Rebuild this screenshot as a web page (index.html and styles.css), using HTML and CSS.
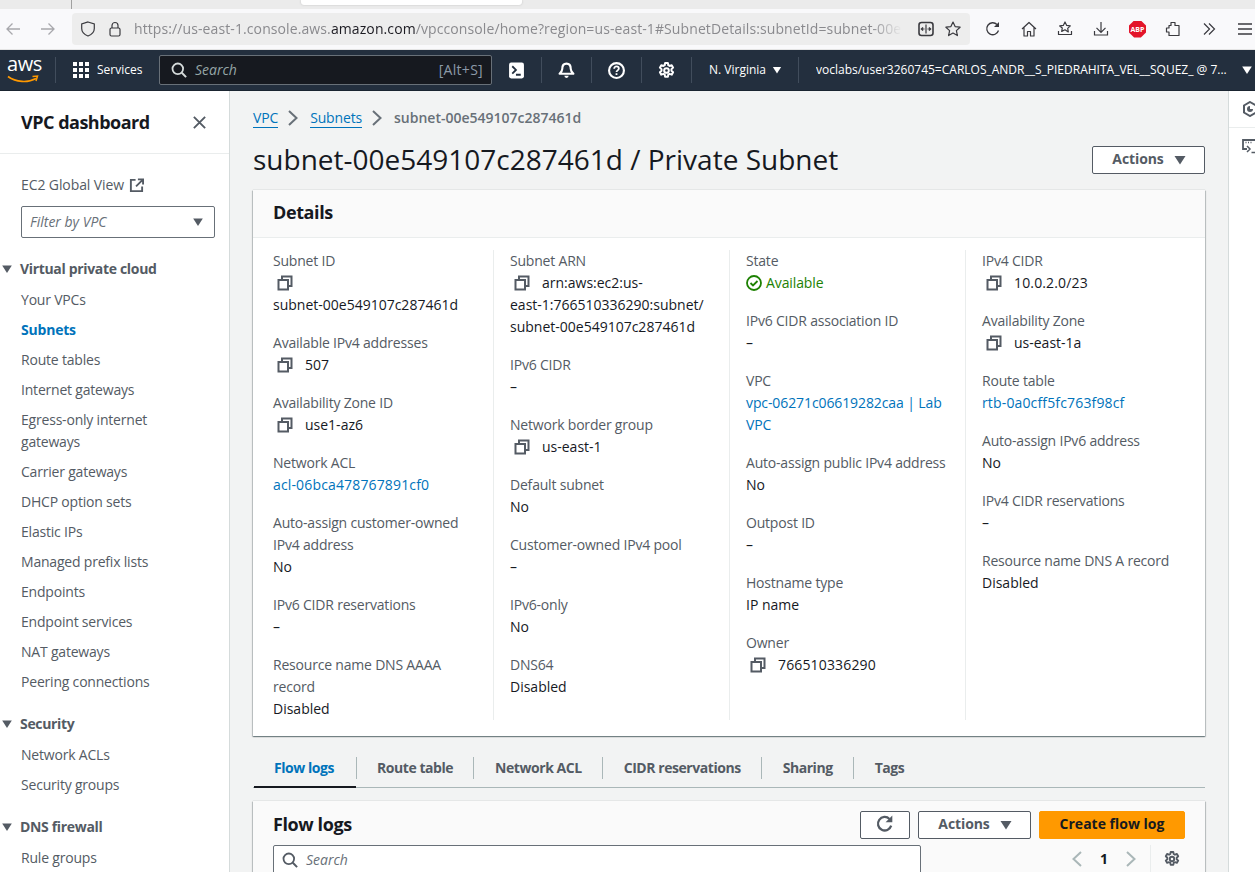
FILE: index.html
```html
<!DOCTYPE html>
<html lang="en">
<head>
<meta charset="utf-8">
<title>Subnet details</title>
<link rel="stylesheet" href="styles.css">
</head>
<body>
<svg class="defs" width="0" height="0">
  <symbol id="copy" viewBox="0 0 16 16"><path d="M1.500 5h9.500v9.500H1.500zM5 5V1.500h9.500V11H11" fill="none" stroke="currentColor" stroke-width="2"/></symbol>
  <symbol id="caret" viewBox="0 0 16 16"><path d="M2.500 4h11L8 12.500z" fill="currentColor"/></symbol>
  <symbol id="chev" viewBox="0 0 18 18"><path d="M5 2l7.500 7L5 16" fill="none" stroke="currentColor" stroke-width="2"/></symbol>
  <symbol id="gear" viewBox="0 0 16 16"><path d="M6.700 1h2.600l.4 2 1.200.7 2-.7 1.300 2.300-1.500 1.400v1.500l1.500 1.400-1.300 2.300-2-.7-1.200.7-.4 2H6.700l-.4-2-1.200-.7-2 .7-1.300-2.300 1.500-1.400V6.700L1.800 5.300 3.100 3l2 .7 1.200-.7z" fill="none" stroke="currentColor" stroke-width="1.900" stroke-linejoin="round"/><circle cx="8" cy="8" r="2.200" fill="none" stroke="currentColor" stroke-width="1.900"/></symbol>
  <symbol id="search" viewBox="0 0 16 16"><circle cx="6.800" cy="6.800" r="5.300" fill="none" stroke="currentColor" stroke-width="1.800"/><path d="M10.800 10.800l4.300 4.300" fill="none" stroke="currentColor" stroke-width="2"/></symbol>
</svg>

<div class="tabstrip"><span class="tabstrip-rule"></span><span class="tabstrip-tab"></span></div>

<div class="toolbar">
  <div class="tb-nav">
    <svg class="tb-icon dim" viewBox="0 0 16 16"><path d="M15 8H2M7.500 2.500L2 8l5.500 5.500" fill="none" stroke="currentColor" stroke-width="1.300"/></svg>
    <svg class="tb-icon dim" viewBox="0 0 16 16"><path d="M1 8h13M8.500 2.500L14 8l-5.500 5.500" fill="none" stroke="currentColor" stroke-width="1.300"/></svg>
  </div>
  <div class="urlbar">
    <svg class="tb-icon" viewBox="0 0 16 16"><path d="M8 1l6.300 2v4.500c0 3.500-2.500 6-6.300 7.500-3.800-1.500-6.300-4-6.300-7.500V3z" fill="none" stroke="currentColor" stroke-width="1.200"/></svg>
    <svg class="tb-icon" viewBox="0 0 16 16"><rect x="3" y="7" width="10" height="8" rx="1.500" fill="none" stroke="currentColor" stroke-width="1.200"/><path d="M5 7V4.500a3 3 0 0 1 6 0V7" fill="none" stroke="currentColor" stroke-width="1.200"/></svg>
    <div class="url"><span>https://us-east-1.console.aws.</span><b>amazon.com</b><span>/vpcconsole/home?region=us-east-1#SubnetDetails:subnetId=subnet-00e549107c287461d</span></div>
    <svg class="tb-icon" viewBox="0 0 16 16"><rect x="1" y="1.500" width="14" height="13" rx="2.500" fill="none" stroke="currentColor" stroke-width="1.600"/><path d="M8 3.500v9M3.500 8h3M5 6.300L3.300 8 5 9.700M12.500 8h-3M11 6.300L12.700 8 11 9.700" fill="none" stroke="currentColor" stroke-width="1.200"/></svg>
    <svg class="tb-icon" viewBox="0 0 16 16"><path d="M8 1l2.100 4.600 5 .6-3.700 3.400 1 5L8 12.100l-4.400 2.500 1-5L.9 6.200l5-.6z" fill="none" stroke="currentColor" stroke-width="1.200" stroke-linejoin="round"/></svg>
  </div>
  <div class="tb-actions">
    <svg class="tb-icon" viewBox="0 0 16 16"><path d="M13.500 9.500A6 6 0 1 1 12 3.500" fill="none" stroke="currentColor" stroke-width="1.300"/><path d="M14 1v5H9z" fill="currentColor"/></svg>
    <svg class="tb-icon" viewBox="0 0 16 16"><path d="M1 8l7-6.500L15 8M3 6.500V15h3.500v-4.500h3V15H13V6.500" fill="none" stroke="currentColor" stroke-width="1.200" stroke-linejoin="round"/></svg>
    <svg class="tb-icon" viewBox="0 0 16 16"><path d="M8 1l1.700 3.400 3.600.5-2.600 2.500.6 3.500L8 8.800l-3.300 1.600.6-3.500L2.700 4.900l3.600-.5zM1.500 10v3.500h13V10" fill="none" stroke="currentColor" stroke-width="1.200" stroke-linejoin="round"/></svg>
    <svg class="tb-icon" viewBox="0 0 16 16"><path d="M8 1v10M3.500 6.800L8 11.300l4.500-4.500M1.500 10v4h13v-4" fill="none" stroke="currentColor" stroke-width="1.200"/></svg>
    <span class="abp">ABP</span>
    <svg class="tb-icon" viewBox="0 0 16 16"><path d="M6 1.500h4v3h4v10H4v-3.500H1.500V7H4V4.500h2z" fill="none" stroke="currentColor" stroke-width="1.200" stroke-linejoin="round"/></svg>
    <svg class="tb-icon" viewBox="0 0 16 16"><path d="M3 2.500L8.500 8 3 13.500M8 2.500L13.500 8 8 13.500" fill="none" stroke="currentColor" stroke-width="1.200"/></svg>
    <svg class="tb-icon" viewBox="0 0 16 16"><path d="M1 3h14M1 8h14M1 13h14" fill="none" stroke="currentColor" stroke-width="1.300"/></svg>
  </div>
</div>

<header class="awsnav">
  <div class="logo"><span class="logo-text">aws</span>
    <svg class="logo-smile" viewBox="0 0 32 9"><path d="M1 1.500c8 6 20 6.500 28 2" fill="none" stroke="#f90" stroke-width="1.700"/><path d="M25.500 1.500l5-.5-1.500 5" fill="none" stroke="#f90" stroke-width="1.500"/></svg>
  </div>
  <span class="nav-sep"></span>
  <svg class="grid-icon" viewBox="0 0 16 16"><path d="M0 0h4v4H0zM6 0h4v4H6zM12 0h4v4h-4zM0 6h4v4H0zM6 6h4v4H6zM12 6h4v4h-4zM0 12h4v4H0zM6 12h4v4H6zM12 12h4v4h-4z" fill="#fff"/></svg>
  <span class="services">Services</span>
  <div class="nav-search">
    <svg class="nav-search-icon" viewBox="0 0 16 16"><use href="#search"/></svg>
    <i class="nav-search-text">Search</i>
    <span class="nav-search-key">[Alt+S]</span>
  </div>
  <span class="nav-slot"><svg class="nav-icon" viewBox="0 0 16 16"><rect x="1" y="0.500" width="14" height="15" rx="2" fill="#fff"/><path d="M4 4l3.500 3.500L4 11M7.500 12h4.500" fill="none" stroke="#232f3e" stroke-width="1.700"/></svg></span>
  <span class="nav-sep"></span>
  <span class="nav-slot"><svg class="nav-icon" viewBox="0 0 16 16"><path d="M8 1.500c3 0 4 2.500 4 5 0 2 1.500 3.500 2.500 4.500h-13c1-1 2.500-2.500 2.500-4.500 0-2.500 1-5 4-5z" fill="none" stroke="#fff" stroke-width="2" stroke-linejoin="round"/><path d="M6 13a2 2 0 0 0 4 0z" fill="#fff"/></svg></span>
  <span class="nav-sep"></span>
  <span class="nav-slot"><svg class="nav-icon" viewBox="0 0 16 16"><circle cx="8" cy="8" r="7" fill="none" stroke="#fff" stroke-width="2"/><path d="M5.800 6.300C5.800 5 6.800 4.200 8 4.200s2.200.8 2.200 2c0 1.700-2.200 1.700-2.200 3.300M8 10.500v1.800" fill="none" stroke="#fff" stroke-width="1.700"/></svg></span>
  <span class="nav-sep"></span>
  <span class="nav-slot"><svg class="nav-icon" viewBox="0 0 16 16"><use href="#gear"/></svg></span>
  <span class="nav-sep"></span>
  <span class="region">N. Virginia</span>
  <svg class="caret-region" viewBox="0 0 16 16"><use href="#caret"/></svg>
  <span class="nav-sep"></span>
  <span class="user">voclabs/user3260745=CARLOS_ANDR__S_PIEDRAHITA_VEL__SQUEZ_ @ 7...</span>
  <svg class="caret-user" viewBox="0 0 16 16"><use href="#caret"/></svg>
</header>

<div class="shell">
  <aside class="sidebar">
    <div class="side-head"><h2>VPC dashboard</h2>
      <svg class="side-close" viewBox="0 0 16 16"><path d="M2 2l12 12M14 2L2 14" fill="none" stroke="currentColor" stroke-width="2"/></svg>
    </div>
    <div class="side-body">
      <div class="ec2">EC2 Global View
        <svg class="ext" viewBox="0 0 16 16"><path d="M7 2H2v12h12V9M9.500 1.500H15V7M14.500 2L7.500 9" fill="none" stroke="currentColor" stroke-width="2"/></svg>
      </div>
      <div class="filter"><i>Filter by VPC</i><svg class="filter-caret" viewBox="0 0 16 16"><use href="#caret"/></svg></div>
      <div class="sec-title first"><svg class="sec-caret" viewBox="0 0 16 16"><use href="#caret"/></svg>Virtual private cloud</div>
      <ul class="side-list">
        <li>Your VPCs</li>
        <li class="active">Subnets</li>
        <li>Route tables</li>
        <li>Internet gateways</li>
        <li>Egress-only internet gateways</li>
        <li>Carrier gateways</li>
        <li>DHCP option sets</li>
        <li>Elastic IPs</li>
        <li>Managed prefix lists</li>
        <li>Endpoints</li>
        <li>Endpoint services</li>
        <li>NAT gateways</li>
        <li>Peering connections</li>
      </ul>
      <div class="sec-title"><svg class="sec-caret" viewBox="0 0 16 16"><use href="#caret"/></svg>Security</div>
      <ul class="side-list">
        <li>Network ACLs</li>
        <li>Security groups</li>
      </ul>
      <div class="sec-title"><svg class="sec-caret" viewBox="0 0 16 16"><use href="#caret"/></svg>DNS firewall</div>
      <ul class="side-list">
        <li>Rule groups</li>
      </ul>
    </div>
  </aside>

  <main class="main">
    <nav class="crumbs">
      <a class="link-u">VPC</a>
      <svg class="crumb-chev" viewBox="0 0 18 18"><use href="#chev"/></svg>
      <a class="link-u">Subnets</a>
      <svg class="crumb-chev" viewBox="0 0 18 18"><use href="#chev"/></svg>
      <span class="crumb-cur">subnet-00e549107c287461d</span>
    </nav>
    <div class="page-head">
      <h1>subnet-00e549107c287461d / Private Subnet</h1>
      <button class="btn btn-actions">Actions<svg class="btn-caret" viewBox="0 0 16 16"><use href="#caret"/></svg></button>
    </div>

    <section class="card">
      <div class="card-head"><h2>Details</h2></div>
      <div class="cols">
        <div class="col">
          <dl><dt>Subnet ID</dt><dd><span class="copyline"><svg class="copy" viewBox="0 0 16 16"><use href="#copy"/></svg></span>subnet-00e549107c287461d</dd></dl>
          <dl><dt>Available IPv4 addresses</dt><dd><svg class="copy copy-in" viewBox="0 0 16 16"><use href="#copy"/></svg>507</dd></dl>
          <dl><dt>Availability Zone ID</dt><dd><svg class="copy copy-in" viewBox="0 0 16 16"><use href="#copy"/></svg>use1-az6</dd></dl>
          <dl><dt>Network ACL</dt><dd><a class="link">acl-06bca478767891cf0</a></dd></dl>
          <dl><dt>Auto-assign customer-owned IPv4 address</dt><dd>No</dd></dl>
          <dl><dt>IPv6 CIDR reservations</dt><dd>–</dd></dl>
          <dl><dt>Resource name DNS AAAA record</dt><dd>Disabled</dd></dl>
        </div>
        <div class="col">
          <dl><dt>Subnet ARN</dt><dd><svg class="copy copy-in" viewBox="0 0 16 16"><use href="#copy"/></svg>arn:aws:ec2:us-<br>east-1:766510336290:subnet/<br>subnet-00e549107c287461d</dd></dl>
          <dl><dt>IPv6 CIDR</dt><dd>–</dd></dl>
          <dl><dt>Network border group</dt><dd><svg class="copy copy-in" viewBox="0 0 16 16"><use href="#copy"/></svg>us-east-1</dd></dl>
          <dl><dt>Default subnet</dt><dd>No</dd></dl>
          <dl><dt>Customer-owned IPv4 pool</dt><dd>–</dd></dl>
          <dl><dt>IPv6-only</dt><dd>No</dd></dl>
          <dl><dt>DNS64</dt><dd>Disabled</dd></dl>
        </div>
        <div class="col">
          <dl><dt>State</dt><dd class="ok"><svg class="ok-icon" viewBox="0 0 16 16"><circle cx="8" cy="8" r="7" fill="none" stroke="currentColor" stroke-width="1.800"/><path d="M4.500 8l2.500 2.500L11.500 6" fill="none" stroke="currentColor" stroke-width="1.800"/></svg>Available</dd></dl>
          <dl><dt>IPv6 CIDR association ID</dt><dd>–</dd></dl>
          <dl><dt>VPC</dt><dd><a class="link link-vpc">vpc-06271c06619282caa | Lab VPC</a></dd></dl>
          <dl><dt>Auto-assign public IPv4 address</dt><dd>No</dd></dl>
          <dl><dt>Outpost ID</dt><dd>–</dd></dl>
          <dl><dt>Hostname type</dt><dd>IP name</dd></dl>
          <dl><dt>Owner</dt><dd class="digits"><svg class="copy copy-in" viewBox="0 0 16 16"><use href="#copy"/></svg>766510336290</dd></dl>
        </div>
        <div class="col">
          <dl><dt>IPv4 CIDR</dt><dd class="digits"><svg class="copy copy-in" viewBox="0 0 16 16"><use href="#copy"/></svg>10.0.2.0/23</dd></dl>
          <dl><dt>Availability Zone</dt><dd><svg class="copy copy-in" viewBox="0 0 16 16"><use href="#copy"/></svg>us-east-1a</dd></dl>
          <dl><dt>Route table</dt><dd><a class="link">rtb-0a0cff5fc763f98cf</a></dd></dl>
          <dl><dt>Auto-assign IPv6 address</dt><dd>No</dd></dl>
          <dl><dt>IPv4 CIDR reservations</dt><dd>–</dd></dl>
          <dl><dt>Resource name DNS A record</dt><dd>Disabled</dd></dl>
        </div>
      </div>
    </section>

    <div class="tabs">
      <span class="tab active">Flow logs</span>
      <span class="tab">Route table</span>
      <span class="tab">Network ACL</span>
      <span class="tab">CIDR reservations</span>
      <span class="tab">Sharing</span>
      <span class="tab">Tags</span>
    </div>

    <section class="card card-flow">
      <div class="flow-head">
        <h2>Flow logs</h2>
        <div class="flow-btns">
          <button class="btn btn-refresh"><svg class="refresh" viewBox="0 0 16 16"><path d="M13.500 9.500A6 6 0 1 1 12 3.500" fill="none" stroke="currentColor" stroke-width="2"/><path d="M14.500 0.500v6h-6z" fill="currentColor"/></svg></button>
          <button class="btn btn-actions">Actions<svg class="btn-caret" viewBox="0 0 16 16"><use href="#caret"/></svg></button>
          <button class="btn btn-primary">Create flow log</button>
        </div>
      </div>
      <div class="flow-tools">
        <div class="flow-search"><svg class="flow-search-icon" viewBox="0 0 16 16"><use href="#search"/></svg><i>Search</i></div>
        <div class="pager">
          <svg class="pager-chev flip" viewBox="0 0 18 18"><use href="#chev"/></svg>
          <b class="pager-num">1</b>
          <svg class="pager-chev" viewBox="0 0 18 18"><use href="#chev"/></svg>
          <span class="pager-sep"></span>
          <svg class="pager-gear" viewBox="0 0 16 16"><use href="#gear"/></svg>
        </div>
      </div>
    </section>
  </main>

  <aside class="rail">
    <div class="rail-top"><svg class="rail-icon" viewBox="0 0 16 16"><path d="M8 1l6 3.500v7L8 15l-6-3.500v-7z" fill="none" stroke="currentColor" stroke-width="2"/><path d="M8 5a3 3 0 1 0 3 3H8z" fill="currentColor"/></svg></div>
    <div class="rail-bottom"><svg class="rail-icon" viewBox="0 0 16 16"><path d="M14 9V2H1v9h4" fill="none" stroke="currentColor" stroke-width="1.800"/><path d="M3.500 4.500h1M6 4.500h1M8.500 4.500h1M5 8l3 3-3 3M9.500 14.500H15" fill="none" stroke="currentColor" stroke-width="1.500"/></svg></div>
  </aside>
</div>
</body>
</html>
```

FILE: styles.css
```css
* { box-sizing: border-box; }
html, body { margin: 0; height: 872px; overflow: hidden; }
body {
  display: flex; flex-direction: column;
  font-family: "Open Sans", "Noto Sans", sans-serif;
  font-size: 14px; line-height: 22px; color: #16191f; background: #f2f3f3;
}
.defs { position: absolute; }
h1, h2, dl, dd, ul { margin: 0; padding: 0; }
ul { list-style: none; }
button { font: inherit; cursor: pointer; }

/* browser chrome */
.tabstrip { height: 9px; flex: none; background: #ebebeb; display: flex; }
.tabstrip-rule { width: 1px; height: 9px; margin-left: 71px; background: #a0a0a0; }
.tabstrip-tab { width: 221px; height: 5px; margin-left: 229px; background: #fff; border-radius: 0 0 3px 3px; box-shadow: 0 0 2px #bbb; }
.toolbar { height: 41px; flex: none; background: #f9f9fb; display: flex; align-items: center; border-bottom: 1px solid #e4e4e4; color: #3a3a3f; }
.tb-icon { width: 16px; height: 16px; flex: none; }
.dim { color: #a8a8ac; }
.tb-nav { width: 72px; display: flex; padding-left: 5px; flex: none; gap: 19px; }
.urlbar { width: 898px; height: 32px; background: #ededed; border-radius: 4px; display: flex; align-items: center; padding: 0 9px 0 8px; flex: none; gap: 11px; }
.url { flex: 1; min-width: 0; white-space: nowrap; overflow: hidden; font-size: 14px; letter-spacing: .1px; color: #8a8a8e; margin-right: 5px; -webkit-mask-image: linear-gradient(to right, #000 96%, transparent); mask-image: linear-gradient(to right, #000 96%, transparent); }
.url b { font-weight: 400; color: #1c1b22; }
.tb-actions { display: flex; align-items: center; gap: 20px; padding-left: 15px; flex: none; }
.abp { width: 17px; height: 17px; margin-right: -1px; background: #e3152a; color: #fff; font-size: 7px; font-weight: 700; line-height: 17px; text-align: center; clip-path: polygon(30% 0, 70% 0, 100% 30%, 100% 70%, 70% 100%, 30% 100%, 0 70%, 0 30%); flex: none; }

/* aws nav */
.awsnav { height: 41px; flex: none; background: #232f3e; display: flex; align-items: center; color: #fff; border-bottom: 1px solid #1a2430; font-size: 12px; }
.logo { width: 55px; padding-left: 7px; height: 30px; position: relative; flex: none; }
.logo-text { display: block; font-size: 20px; line-height: 20px; letter-spacing: -0.4px; margin-top: -1px; }
.logo-smile { position: absolute; left: 7px; top: 20px; width: 32px; height: 9px; }
.nav-sep { width: 1px; height: 26px; background: #414d5c; flex: none; }
.grid-icon { width: 16px; height: 16px; margin: 0 8px 0 17px; flex: none; }
.services { width: 45px; white-space: nowrap; flex: none; }
.nav-search { width: 333px; height: 30px; margin-left: 17px; background: #16191f; border: 1px solid #687078; border-radius: 2px; display: flex; align-items: center; padding: 0 8px 0 11px; flex: none; }
.nav-search-icon { width: 16px; height: 16px; color: #d5dbdb; margin-right: 8px; }
.nav-search-text { flex: 1; font-size: 14px; color: #95a5a6; }
.nav-search-key { font-size: 14px; letter-spacing: .3px; color: #8d99a8; }
.nav-slot { width: 49px; display: flex; justify-content: center; flex: none; }
.nav-icon { width: 17px; height: 17px; }
.region { margin-left: 17px; white-space: nowrap; flex: none; }
.caret-region { width: 12px; height: 12px; margin: 0 15px 0 5px; flex: none; }
.caret-user { width: 14px; height: 14px; margin-left: 2px; flex: none; }
.user { margin-left: 17px; width: 422px; white-space: nowrap; overflow: hidden; flex: none; }

/* layout */
.shell { flex: 1; min-height: 0; display: flex; }
.sidebar { width: 230px; flex: none; background: #fff; border-right: 1px solid #d5dbdb; color: #545b64; overflow: hidden; }
.side-head { height: 63px; display: flex; align-items: center; justify-content: space-between; padding: 0 21px; border-bottom: 1px solid #eaeded; }
.side-head h2 { font-size: 18px; line-height: 22px; font-weight: 700; letter-spacing: -.5px; color: #16191f; }
.side-close { width: 15px; height: 15px; margin-right: 1px; }
.side-body { padding-top: 20px; }
.ec2 { padding-left: 21px; height: 22px; display: flex; align-items: center; gap: 5px; letter-spacing: -.1px; }
.ext { width: 15px; height: 15px; }
.filter { margin: 10px 14px 0 21px; height: 32px; border: 1px solid #687078; border-radius: 2px; display: flex; align-items: center; justify-content: space-between; padding: 0 9px 0 8px; color: #687078; }
.filter-caret { width: 14px; height: 14px; color: #545b64; }
.sec-title { display: flex; align-items: center; font-weight: 700; margin-top: 16px; height: 22px; letter-spacing: -.33px; }
.sec-title.first { margin-top: 20px; }
.sec-caret { width: 14px; height: 14px; margin-right: 6px; }
.side-list { margin-top: 5px; padding: 0 21px; letter-spacing: -.2px; }
.side-list li { padding: 4px 0; line-height: 22px; }
.side-list li.active { color: #0073bb; font-weight: 700; }

.main { flex: 1; min-width: 0; padding: 16px 23px 0; overflow: hidden; }
.crumbs { display: flex; align-items: center; height: 22px; }
.link-u { color: #0073bb; border-bottom: 1px solid #0073bb; line-height: 18px; letter-spacing: -.15px; }
.crumb-chev { width: 18px; height: 18px; margin: 0 8px 0 6px; color: #687078; }
.crumb-cur { color: #687078; font-weight: 600; }
.page-head { display: flex; align-items: center; justify-content: space-between; margin-top: 13px; height: 36px; margin-bottom: 12px; }
.page-head h1 { font-size: 28px; line-height: 36px; font-weight: 400; position: relative; top: -1px; }
.btn { height: 28px; border: 1px solid #545b64; border-radius: 2px; background: #fff; color: #545b64; font-weight: 700; font-size: 14px; display: inline-flex; align-items: center; justify-content: center; padding: 0 0 2px; }
.btn-actions { width: 113px; padding-left: 3px; letter-spacing: -.1px; }
.btn-caret { width: 16px; height: 16px; margin: 2px 0 0 8px; }
.btn-refresh { width: 50px; }
.refresh { width: 18px; height: 18px; }
.btn-primary { width: 146px; background: #f90; border-color: #f90; color: #16191f; }

.card { background: #fff; box-shadow: 0 0 1px rgba(0,28,36,.3), 0 1px 1px rgba(0,28,36,.3), 1px 1px 1px rgba(0,28,36,.15), -1px 1px 1px rgba(0,28,36,.15); }
.card-head { height: 48px; background: #fafafa; border-bottom: 1px solid #eaeded; padding: 0 20px 3px; display: flex; align-items: center; }
.card-head h2, .flow-head h2 { font-size: 18px; line-height: 22px; font-weight: 700; letter-spacing: -.4px; }
.cols { display: grid; grid-template-columns: 237px 236px 236px 1fr; padding: 12px 0 16px 4px; }
.col { padding: 0 16px; border-right: 1px solid #eaeded; height: 470px; }
.col:last-child { border-right: 0; }
dl { margin-bottom: 16px; }
dl:last-child { margin-bottom: 0; }
dt { color: #545b64; letter-spacing: -.2px; }
dd { color: #16191f; }
.copyline { display: block; height: 22px; }
.copy { width: 16px; height: 16px; color: #545b64; display: inline-block; vertical-align: -3px; margin-left: 4px; }
.copy-in { margin-right: 12px; }
.digits { letter-spacing: .15px; }
.link { color: #0073bb; letter-spacing: .15px; }
.link-vpc { letter-spacing: -.1px; }
.ok { color: #1d8102; display: flex; align-items: center; letter-spacing: -.1px; }
.ok-icon { width: 16px; height: 16px; margin-right: 4px; flex: none; }

.tabs { display: flex; height: 40px; margin-top: 12px; padding-left: 1px; border-bottom: 1px solid #aab7b8; align-items: center; position: relative; }
.tab { padding: 0 20px 0 21px; height: 22px; border-right: 1px solid #aab7b8; font-weight: 700; color: #545b64; white-space: nowrap; letter-spacing: -.45px; }
.tab:first-child { padding: 0 22px 0 20px; }
.tab:nth-child(2) { padding-left: 20px; }
.tab:last-child { border-right: 0; }
.tab.active { color: #0073bb; position: relative; }
.tab.active::after { content: ""; position: absolute; left: 0; right: 0; bottom: -9px; height: 2px; background: #16191f; }

.card-flow { margin-top: 13px; height: 120px; background: #fafafa; padding: 10px 20px 0; }
.flow-head { display: flex; align-items: center; justify-content: space-between; height: 28px; }
.flow-head h2 { padding-bottom: 2px; }
.flow-btns { display: flex; gap: 8px; }
.flow-tools { display: flex; align-items: flex-start; margin-top: 6px; }
.flow-search { width: 648px; height: 32px; border: 1px solid #687078; border-radius: 2px; background: #fff; display: flex; align-items: center; padding: 0 0 2px 8px; gap: 8px; color: #687078; }
.flow-search-icon { width: 16px; height: 16px; color: #545b64; }
.pager { flex: 1; display: flex; align-items: center; height: 28px; padding-left: 147px; }
.pager-chev { width: 18px; height: 18px; color: #aab7b8; flex: none; }
.flip { transform: scaleX(-1); }
.pager-num { width: 36px; text-align: center; }
.pager-sep { width: 1px; height: 28px; background: #eaeded; margin: 0 13px 0 10px; flex: none; }
.pager-gear { width: 16px; height: 16px; color: #545b64; flex: none; }

.rail { width: 27px; flex: none; background: #fff; border-left: 1px solid #d5dbdb; color: #545b64; overflow: hidden; }
.rail-top { height: 37px; border-bottom: 1px solid #eaeded; padding: 10px 0 0 13px; }
.rail-bottom { padding: 10px 0 0 13px; }
.rail-icon { width: 16px; height: 16px; display: block; }
```
